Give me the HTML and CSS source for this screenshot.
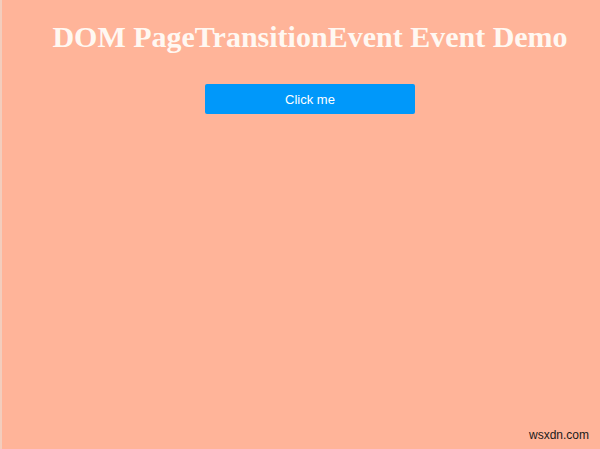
FILE: index.html
```html
<!DOCTYPE html>
<html>
<head>
<meta charset="utf-8">
<link rel="stylesheet" href="styles.css">
</head>
<body>
<div class="page">
  <h1 class="title">DOM PageTransitionEvent Event Demo</h1>
  <button class="btn">Click me</button>
  <div class="spacer"></div>
  <div class="footer"><span class="mark">wsxdn.com</span></div>
</div>
</body>
</html>
```

FILE: styles.css
```css
html, body {
  margin: 0;
  padding: 0;
  height: 100%;
}
body {
  background: #ffb499;
}
.page {
  height: 449px;
  box-sizing: border-box;
  border-left: 2px solid #f3cdbd;
  display: flex;
  flex-direction: column;
  align-items: center;
}
.title {
  margin: 20px 0 0 18px;
  font-family: "Liberation Serif", serif;
  font-weight: bold;
  font-size: 30px;
  line-height: 34px;
  color: #fff8f2;
}
.btn {
  margin: 30px 0 0 18px;
  width: 210px;
  height: 30px;
  background: #0098fa;
  color: #ffffff;
  border: none;
  border-radius: 2px;
  font-family: "Liberation Sans", Arial, sans-serif;
  font-size: 13px;
  padding: 0;
}
.spacer {
  flex: 1;
}
.footer {
  align-self: stretch;
  display: flex;
  justify-content: flex-end;
  padding: 0 11px 7px 0;
}
.mark {
  font-family: "Liberation Sans", Arial, sans-serif;
  font-size: 12px;
  color: #1a1a1a;
}
```
